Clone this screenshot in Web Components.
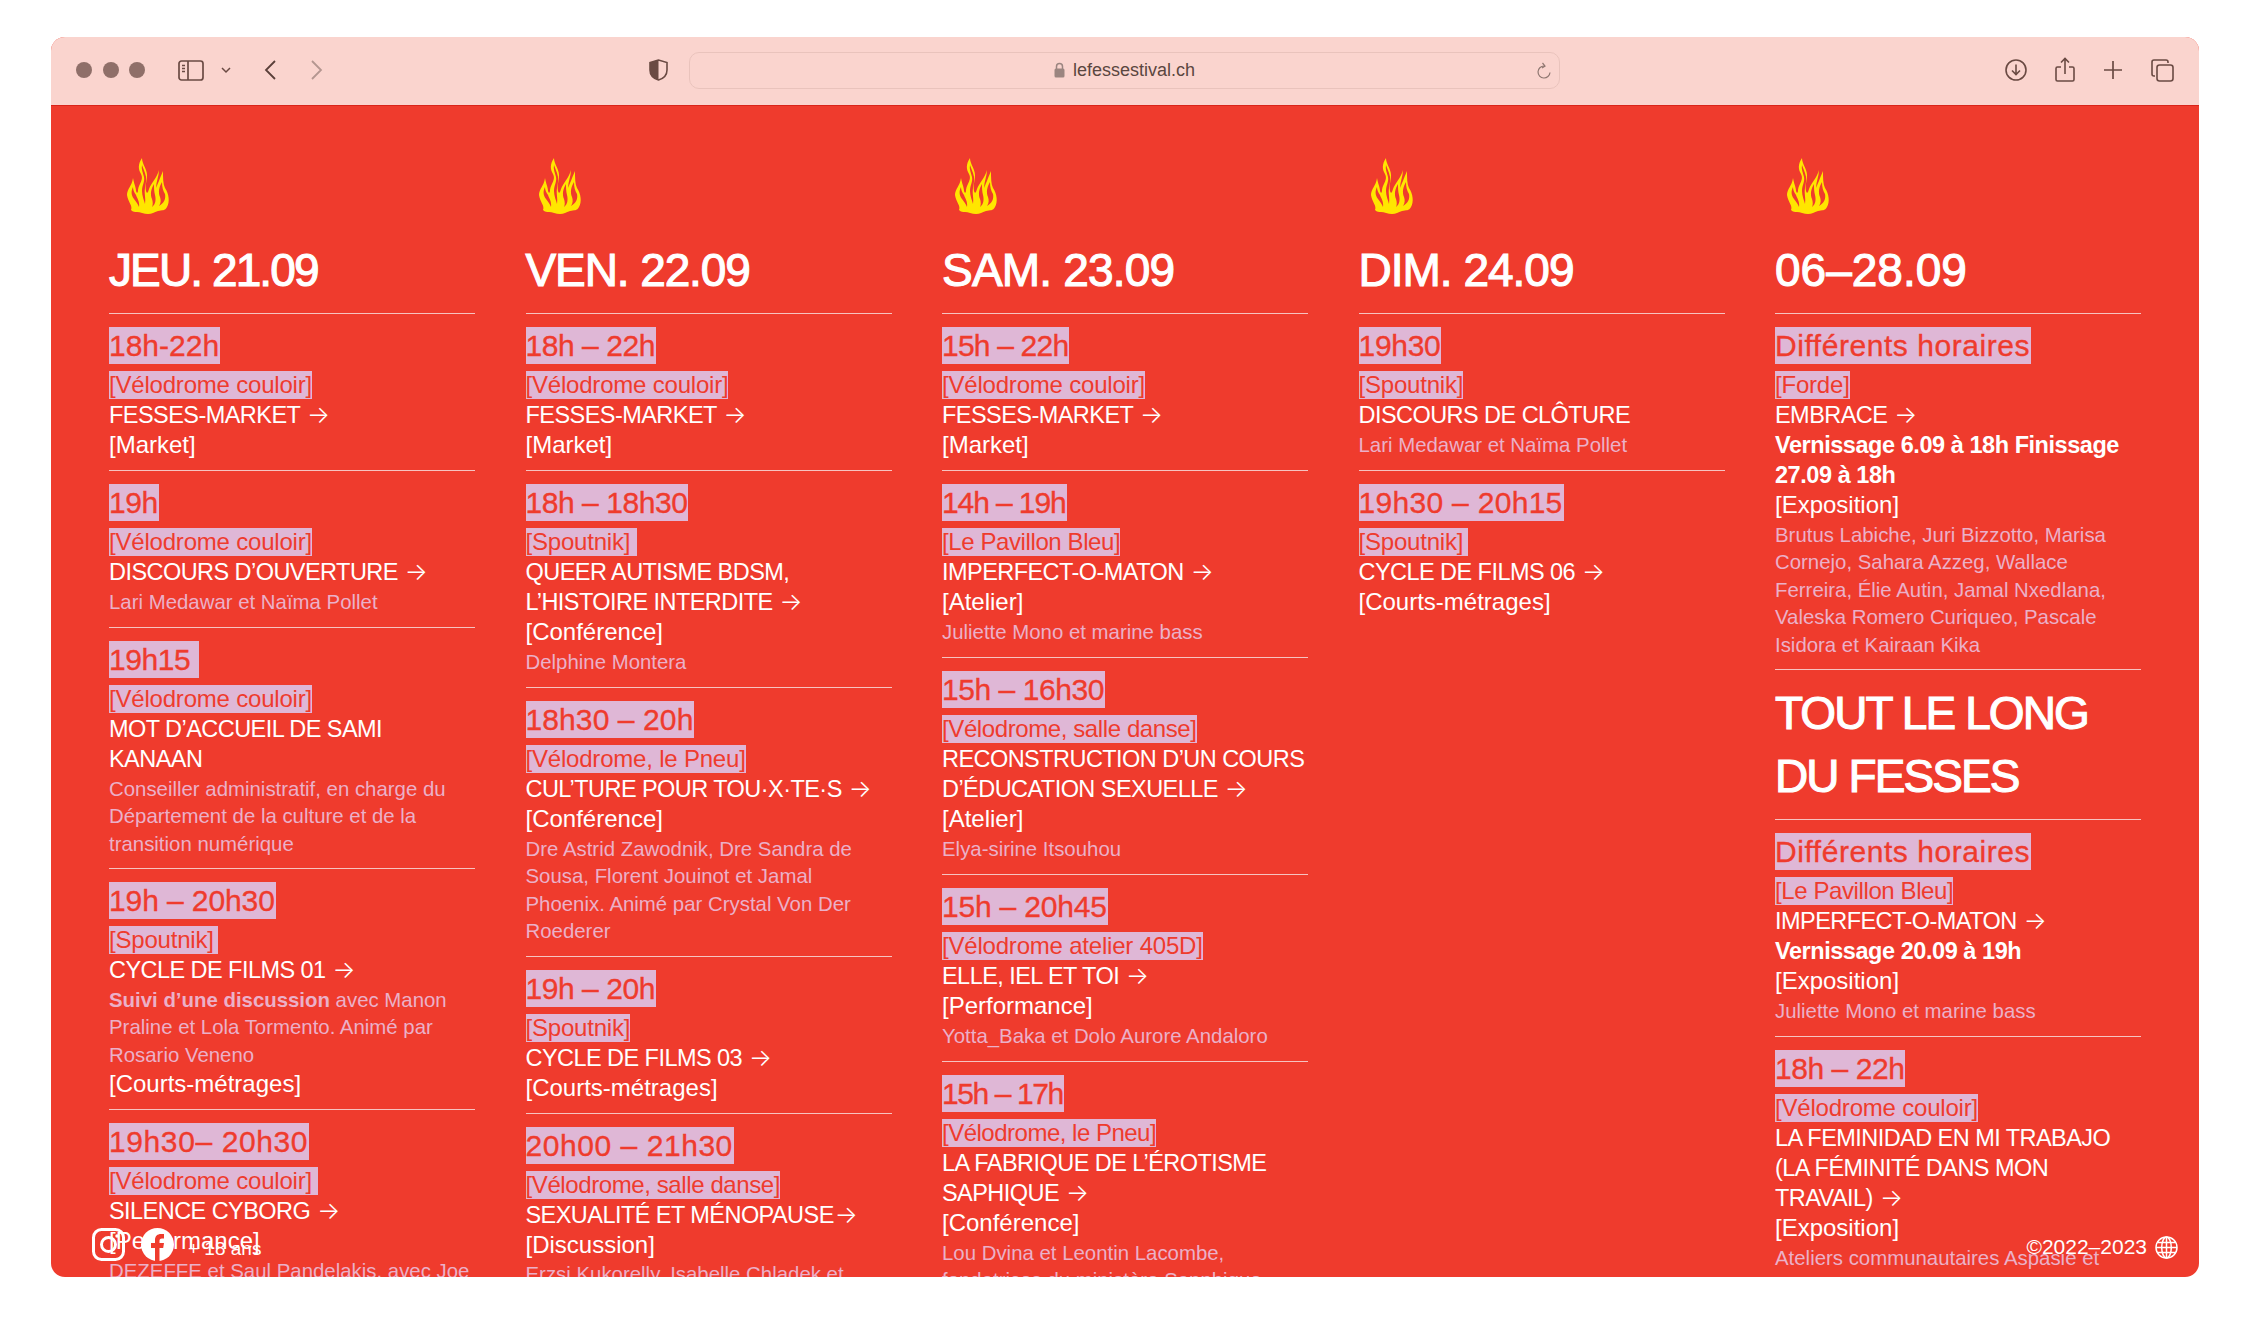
<!DOCTYPE html>
<html lang="fr"><head><meta charset="utf-8"><title>Le Fesses Festival</title>
<style>
html,body{margin:0;background:#fff}
body{font-family:"Liberation Sans",Arial,sans-serif}
.a{font-family:"Inter","DejaVu Sans",sans-serif;font-style:normal;letter-spacing:0;font-size:24px;font-weight:300;margin-left:1px}
</style></head><body>
<template id="tpl-page"><style>
:host{display:block;box-sizing:border-box;height:1319px;padding:37px 51px 42px;background:#fff}
.win{height:100%;display:flex;flex-direction:column;border-radius:14px;overflow:hidden;position:relative;background:#ef3b2d}
.body{flex:1;min-height:0;overflow:hidden;display:grid;grid-template-columns:repeat(5,1fr);column-gap:50.5px;padding:0 58px;align-items:start}
</style><div class="win"><slot name="bar"></slot><div class="body"><slot></slot></div><slot name="foot"></slot></div></template>

<template id="tpl-bar"><style>
:host{display:flex;align-items:center;height:69px;flex:none;box-sizing:border-box;background:#fad4ce;border-bottom:1.5px solid #d9241a;padding:0 25px 2px 25px;color:#6a4a43}
svg{display:block;flex:none}
.dots{display:flex;gap:10.5px;margin-right:33px}
.dots i{width:16px;height:16px;border-radius:50%;background:#8f6f69}
.sb{margin-right:17px}
.chev{margin-right:33px}
.back{margin-right:35px}
.fwd{margin-right:326px}
.url{margin-left:21px;width:871px;height:37px;box-sizing:border-box;border:1.5px solid #e9c3bc;border-radius:10px;display:flex;align-items:center;justify-content:center;position:relative;font-size:18px;color:#5a4640;gap:8px}
.url .re{position:absolute;right:8px;top:9px}
.r{display:flex;align-items:center;margin-left:auto}
</style>
<div class="dots"><i></i><i></i><i></i></div>
<svg class="sb" width="26" height="21" viewBox="0 0 26 21" fill="none" stroke="#6a4a43" stroke-width="1.7"><rect x="1" y="1" width="24" height="19" rx="2.5"/><path d="M10 1v19"/><path d="M4 5.500h3M4 8.500h3M4 11.500h3" stroke-width="1.300"/></svg>
<svg class="chev" width="10" height="7" viewBox="0 0 10 7" fill="none" stroke="#6a4a43" stroke-width="1.5"><path d="M1 1l4 4 4-4"/></svg>
<svg class="back" width="12" height="20" viewBox="0 0 12 20" fill="none" stroke="#5a3f39" stroke-width="1.8"><path d="M11 1L2 10l9 9"/></svg>
<svg class="fwd" width="12" height="20" viewBox="0 0 12 20" fill="none" stroke="#b49690" stroke-width="1.8"><path d="M1 1l9 9-9 9"/></svg>
<svg width="19" height="22" viewBox="0 0 19 22"><path d="M9.5 1L1 3.5V11c0 5 3.5 8.500 8.500 10 5-1.500 8.500-5 8.500-10V3.500z" fill="#fad4ce" stroke="#6a4a43" stroke-width="1.600"/><path d="M9.500 1L1 3.500V11c0 5 3.500 8.500 8.500 10z" fill="#6a4a43"/></svg>
<div class="url"><svg width="11" height="16" viewBox="0 0 11 16"><rect x="0.500" y="6.500" width="10" height="9" rx="1.500" fill="#9b8580"/><path d="M2.500 7V4.500a3 3 0 0 1 6 0V7" fill="none" stroke="#9b8580" stroke-width="1.500"/></svg><span>lefessestival.ch</span>
<svg class="re" width="14" height="18" viewBox="0 0 14 18" fill="none" stroke="#8f7771" stroke-width="1.200"><path d="M7 4a6 6 0 1 0 6 6.500"/><path d="M5.500 1L8 4 5 6"/></svg></div>
<div class="r">
<svg width="22" height="22" viewBox="0 0 22 22" fill="none" stroke="#6a4a43" stroke-width="1.600" style="margin-right:28px"><circle cx="11" cy="11" r="10"/><path d="M11 5.500v10M7 11.500l4 4 4-4"/></svg>
<svg width="20" height="26" viewBox="0 0 20 26" fill="none" stroke="#6a4a43" stroke-width="1.600" style="margin-right:29px"><path d="M6 10H2.500A1.500 1.500 0 0 0 1 11.500v11A1.500 1.500 0 0 0 2.500 24h15a1.500 1.500 0 0 0 1.500-1.500v-11A1.500 1.500 0 0 0 17.500 10H14"/><path d="M10 17V1.500M6 5.500l4-4 4 4"/></svg>
<svg width="18" height="18" viewBox="0 0 18 18" fill="none" stroke="#6a4a43" stroke-width="1.700" style="margin-right:29px"><path d="M9 0v18M0 9h18"/></svg>
<svg width="23" height="23" viewBox="0 0 23 23" fill="none" stroke="#6a4a43" stroke-width="1.600"><path d="M4 17H3a2 2 0 0 1-2-2V3a2 2 0 0 1 2-2h12a2 2 0 0 1 2 2v1"/><rect x="6" y="6" width="16" height="16" rx="2.500"/></svg>
</div></template>

<template id="tpl-day"><style>
:host{display:block;color:#fff}
.fl{display:block;margin:52px 0 0 var(--fx,13px)}
h2{margin:30px 0 0;font-size:46px;line-height:50px;letter-spacing:var(--ls,-1px);font-weight:400;-webkit-text-stroke:1.1px #fff;padding-bottom:18px;border-bottom:1.5px solid #f6c3c0}
</style>
<svg class="fl" width="43" height="57" viewBox="0 0 43 57"><path fill="#ffe600" d="M4 52C6 48 1 44 0 37C0 31 5 28 6 20C7 26 9 29 9 33C10 36 11 35 11 32C12 25 17 22 14 16C11 11 11 6 15 0C15 6 20 11 20 17C20 23 18 27 19 33C20 36 21 35 22 31C24 25 30 20 32 12C32 18 29 24 29 30C30 28 33 20 36 13C36 20 36 26 38 30C42 36 43 44 40 49C38 53 35 52 31 53C27 54 25 56 21 56C17 56 13 54 10 54C8 54 6 54 4 52Z"/><path fill="#ef3b2d" d="M15 7C14 11 16 15 17 19C18 24 15 27 15 33C15 38 17 42 18 46C19 40 17 36 18 30C19 25 20 20 18 15C17 12 16 10 15 7ZM6 29C4 33 4 37 7 41C9 44 11 46 12 49C13 44 10 40 9 37C7 34 6 32 6 29ZM27 26C24 31 23 36 25 41C26 44 26 47 25 49C29 46 29 41 28 37C27 33 27 30 27 26ZM35 24C32 29 31 34 33 39C34 42 34 45 32 48C37 45 39 41 38 36C36 33 35 29 35 24Z"/></svg>
<h2></h2><slot></slot></template>

<template id="tpl-event"><style>
:host{display:block;padding:13px 0 10px;border-bottom:1.5px solid #f6c3c0;color:#fff;font-size:24px;line-height:30px}
:host(:last-child),:host([last]){border-bottom:none}
.tm,.vn{display:table;background:#dfb7d6;color:#ef3b2d}
.tm{font-size:30px;line-height:37px;letter-spacing:-.45px;height:37px;padding-right:1px;-webkit-text-stroke:.35px #ef3b2d}
.vn{font-size:24px;line-height:28px;margin:7px 0 1px;letter-spacing:-.2px}
::slotted(.t){display:block;font-size:23.5px;letter-spacing:-.55px}
::slotted(.b){display:block;font-size:23.500px;font-weight:700;letter-spacing:-.45px}
::slotted(.y){display:block;font-size:24px}
::slotted(.g){display:block;box-sizing:border-box;font-size:20.4px;line-height:27.5px;padding-top:1.5px;min-height:30px;color:#ebb0c8}
</style><div class="tm"></div><div class="vn"></div><slot></slot></template>

<template id="tpl-head"><style>
:host{display:block;color:#fff;font-size:46px;line-height:63px;font-weight:400;-webkit-text-stroke:1.1px #fff;letter-spacing:-1.9px;padding:12px 0 11px;border-bottom:1.5px solid #f6c3c0}
</style><slot></slot></template>

<template id="tpl-foot"><style>
:host{position:absolute;left:0;right:0;bottom:0;height:0;color:#fff}
.l,.r{position:absolute;display:flex;align-items:center}
.l{left:41px;bottom:17px;font-size:19px;height:32px}
.r{right:21px;bottom:18px;font-size:21px;height:24px}
svg{display:block;flex:none}
</style>
<div class="l"><svg width="33" height="33" viewBox="0 0 33 33" fill="none" stroke="#fff" stroke-width="3"><rect x="1.500" y="1.500" width="30" height="30" rx="8"/><circle cx="16.500" cy="16.500" r="7"/><circle cx="25" cy="8" r="1" fill="#fff" stroke-width="1.500"/></svg>
<svg width="33" height="33" viewBox="0 0 33 33" style="margin:0 14px 0 16px"><circle cx="16.500" cy="16.500" r="16.500" fill="#fff"/><path fill="#ef3b2d" d="M14 33V20h-4v-5h4v-3c0-4 2.500-6 6-6h3v4.500h-2c-2 0-2.500 1-2.500 2.500v2h4.500l-.8 5h-3.700v13z"/></svg><span style="margin-top:9px">+ 18 ans</span></div>
<div class="r"><span>©2022–2023</span><svg width="23" height="23" viewBox="0 0 23 23" fill="none" stroke="#fff" stroke-width="1.500" style="margin-left:8px"><circle cx="11.500" cy="11.500" r="10.500"/><ellipse cx="11.500" cy="11.500" rx="4.800" ry="10.500"/><path d="M11.500 1v21M2.500 6.500h18M1 11.500h21M2.500 16.500h18"/></svg></div></template>

<script>
const mk=(tag,id,init)=>customElements.define(tag,class extends HTMLElement{
  constructor(){super();this.attachShadow({mode:'open'}).appendChild(document.getElementById(id).content.cloneNode(true));}
  connectedCallback(){init&&init(this)}
});
mk('fest-page','tpl-page');mk('fest-bar','tpl-bar');mk('fest-head','tpl-head');mk('fest-foot','tpl-foot');
mk('fest-day','tpl-day',e=>{e.shadowRoot.querySelector('h2').textContent=e.getAttribute('date');if(e.hasAttribute('fx'))e.style.setProperty('--fx',e.getAttribute('fx'));if(e.hasAttribute('ls'))e.style.setProperty('--ls',e.getAttribute('ls'))});
mk('fest-event','tpl-event',e=>{const s=e.shadowRoot,t=s.querySelector('.tm'),v=s.querySelector('.vn');t.textContent=e.getAttribute('time');v.textContent=e.getAttribute('venue');
 if(e.hasAttribute('ls'))t.style.letterSpacing=e.getAttribute('ls');if(e.hasAttribute('vs'))v.style.letterSpacing=e.getAttribute('vs')});
</script>

<fest-page>
<fest-bar slot="bar"></fest-bar>

<fest-day date="JEU. 21.09" fx="18px" ls="-1.9px">
<fest-event time="18h-22h" ls="0px" venue="[Vélodrome couloir]"><span class="t">FESSES-MARKET →</span><span class="y">[Market]</span></fest-event>
<fest-event time="19h" venue="[Vélodrome couloir]"><span class="t">DISCOURS D’OUVERTURE →</span><span class="g">Lari Medawar et Naïma Pollet</span></fest-event>
<fest-event time="19h15&nbsp;" venue="[Vélodrome couloir]"><span class="t">MOT D’ACCUEIL DE SAMI KANAAN</span><span class="g">Conseiller administratif, en charge du Département de la culture et de la transition numérique</span></fest-event>
<fest-event time="19h – 20h30" ls="-.1px" venue="[Spoutnik]&thinsp;"><span class="t">CYCLE DE FILMS 01 →</span><span class="g"><b>Suivi d’une discussion</b> avec Manon Praline et Lola Tormento. Animé par Rosario Veneno</span><span class="y">[Courts-métrages]</span></fest-event>
<fest-event time="19h30– 20h30" ls=".6px" venue="[Vélodrome couloir]&nbsp;"><span class="t">SILENCE CYBORG →</span><span class="y">[Performance]</span><span class="g">DEZEFFE et Saul Pandelakis, avec Joe Talbot et Clara Schulmann</span></fest-event>
</fest-day>

<fest-day date="VEN. 22.09" ls="-1.1px">
<fest-event time="18h – 22h" venue="[Vélodrome couloir]"><span class="t">FESSES-MARKET →</span><span class="y">[Market]</span></fest-event>
<fest-event time="18h – 18h30" venue="[Spoutnik]&nbsp;"><span class="t">QUEER AUTISME BDSM, L’HISTOIRE INTERDITE →</span><span class="y">[Conférence]</span><span class="g">Delphine Montera</span></fest-event>
<fest-event time="18h30 – 20h" ls=".1px" venue="[Vélodrome, le Pneu]"><span class="t">CUL’TURE POUR TOU·X·TE·S →</span><span class="y">[Conférence]</span><span class="g">Dre Astrid Zawodnik, Dre Sandra de Sousa, Florent Jouinot et Jamal Phoenix. Animé par Crystal Von Der Roederer</span></fest-event>
<fest-event time="19h – 20h" venue="[Spoutnik]"><span class="t">CYCLE DE FILMS 03 →</span><span class="y">[Courts-métrages]</span></fest-event>
<fest-event time="20h00 – 21h30" ls=".55px" vs="-.4px" venue="[Vélodrome, salle danse]"><span class="t">SEXUALITÉ ET MÉNOPAUSE→</span><span class="y">[Discussion]</span><span class="g">Erzsi Kukorelly, Isabelle Chladek et Marie Thévenaz</span></fest-event>
</fest-day>

<fest-day date="SAM. 23.09" ls="-.8px">
<fest-event time="15h – 22h" ls="-.8px" venue="[Vélodrome couloir]"><span class="t">FESSES-MARKET →</span><span class="y">[Market]</span></fest-event>
<fest-event time="14h – 19h" ls="-1.1px" vs="-.4px" venue="[Le Pavillon Bleu]"><span class="t">IMPERFECT-O-MATON →</span><span class="y">[Atelier]</span><span class="g">Juliette Mono et marine bass</span></fest-event>
<fest-event time="15h – 16h30" vs="-.4px" venue="[Vélodrome, salle danse]"><span class="t">RECONSTRUCTION D’UN COURS D’ÉDUCATION SEXUELLE →</span><span class="y">[Atelier]</span><span class="g">Elya-sirine Itsouhou</span></fest-event>
<fest-event time="15h – 20h45" ls="-.2px" venue="[Vélodrome atelier 405D]"><span class="t">ELLE, IEL ET TOI →</span><span class="y">[Performance]</span><span class="g">Yotta_Baka et Dolo Aurore Andaloro</span></fest-event>
<fest-event time="15h – 17h" ls="-1.4px" vs="-.5px" venue="[Vélodrome, le Pneu]"><span class="t">LA FABRIQUE DE L’ÉROTISME SAPHIQUE →</span><span class="y">[Conférence]</span><span class="g">Lou Dvina et Leontin Lacombe, fondatrices du ministère Sapphique</span></fest-event>
</fest-day>

<fest-day date="DIM. 24.09" fx="12px" ls="-1px">
<fest-event time="19h30" ls="-.3px" venue="[Spoutnik]"><span class="t">DISCOURS DE CLÔTURE</span><span class="g">Lari Medawar et Naïma Pollet</span></fest-event>
<fest-event time="19h30 – 20h15" ls=".3px" venue="[Spoutnik]&thinsp;"><span class="t">CYCLE DE FILMS 06 →</span><span class="y">[Courts-métrages]</span></fest-event>
</fest-day>

<fest-day date="06–28.09" fx="12px" ls="0px">
<fest-event time="Différents horaires" ls=".55px" venue="[Forde]"><span class="t">EMBRACE →</span><span class="b">Vernissage 6.09 à 18h Finissage 27.09 à 18h</span><span class="y">[Exposition]</span><span class="g">Brutus Labiche, Juri Bizzotto, Marisa Cornejo, Sahara Azzeg, Wallace Ferreira, Élie Autin, Jamal Nxedlana, Valeska Romero Curiqueo, Pascale Isidora et Kairaan Kika</span></fest-event>
<fest-head>TOUT LE LONG DU FESSES</fest-head>
<fest-event time="Différents horaires" ls=".55px" vs="-.4px" venue="[Le Pavillon Bleu]"><span class="t">IMPERFECT-O-MATON →</span><span class="b">Vernissage 20.09 à 19h</span><span class="y">[Exposition]</span><span class="g">Juliette Mono et marine bass</span></fest-event>
<fest-event time="18h – 22h" venue="[Vélodrome couloir]"><span class="t">LA FEMINIDAD EN MI TRABAJO (LA FÉMINITÉ DANS MON TRAVAIL) →</span><span class="y">[Exposition]</span><span class="g">Ateliers communautaires Aspasie et Boulevard Romand</span></fest-event>
</fest-day>

<fest-foot slot="foot"></fest-foot>
</fest-page>
<script>
document.querySelectorAll('fest-event .t').forEach(s=>{s.innerHTML=s.innerHTML.replace('→','<i class="a">→</i>')});
</script>
</body></html>
